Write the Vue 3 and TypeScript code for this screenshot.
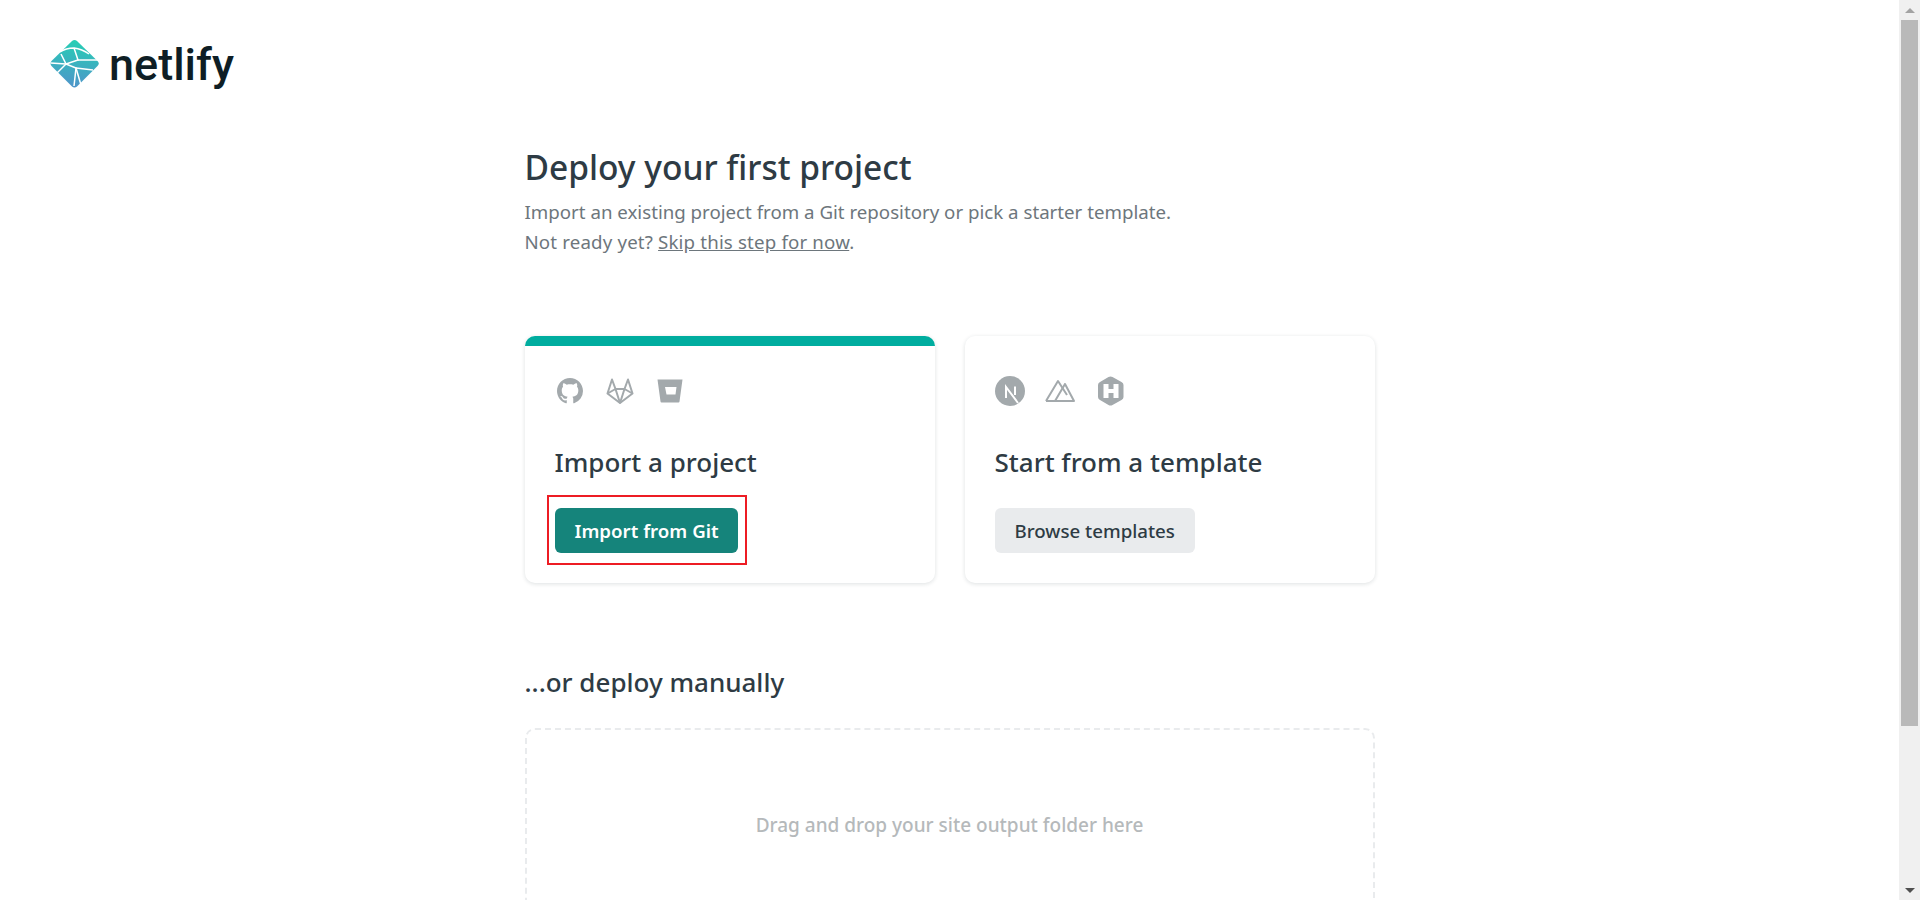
<script setup lang="ts">
const gitIcons = ["github", "gitlab", "bitbucket"];
const templateIcons = ["next", "nuxt", "hugo"];
</script>

<template>
  <div class="shell">
    <div class="viewport">
      <header class="top">
        <a class="logo" href="#">
          <svg class="logo-mark" width="50" height="50" viewBox="0 0 50 50">
            <defs>
              <linearGradient id="logo-grad" x1="0.55" y1="0" x2="0.45" y2="1">
                <stop offset="0" stop-color="#25cfb4" />
                <stop offset="1" stop-color="#4f94ca" />
              </linearGradient>
            </defs>
            <path d="M22 2 Q24.500 0 27 2 L47.500 22 Q50 24.500 47.500 27 L27 47.500 Q24.500 49.500 22 47.500 L1.500 27 Q-0.500 24.500 1.500 22 Z" fill="url(#logo-grad)" />
            <g fill="none" stroke="#fff" stroke-width="1.500">
              <path d="M10 13 Q16 9 24 9 Q32 10 39 15" />
              <path d="M24 9 L28 21 L16 25" />
              <path d="M16 25 L11 15" />
              <path d="M16 25 L0.500 24" />
              <path d="M16 25 L6 35" />
              <path d="M16 25 L26 29 L24 47" />
              <path d="M28 21 L49 21" />
              <path d="M26 29 L31 46" />
              <path d="M26 29 L43 31" />
            </g>
          </svg>
          <span class="logo-text">netlify</span>
        </a>
      </header>

      <main class="content">
        <h1 class="title">Deploy your first project</h1>
        <p class="lead">
          Import an existing project from a Git repository or pick a starter template.<br />
          <span class="lead-second">Not ready yet? <a href="#" class="skip">Skip this step for now</a>.</span>
        </p>

        <div class="cards">
          <section class="card card-active">
            <div class="icons icons-git">
              <template v-for="icon in gitIcons" :key="icon">
                <svg v-if="icon === 'github'" class="icon" width="26" height="26" viewBox="0 0 16 16">
                  <path fill="#a3a9ac" d="M8 0C3.58 0 0 3.58 0 8c0 3.54 2.29 6.53 5.47 7.59.4.07.55-.17.55-.38 0-.19-.01-.82-.01-1.49-2.01.37-2.53-.49-2.69-.94-.09-.23-.48-.94-.82-1.13-.28-.15-.68-.52-.01-.53.63-.01 1.08.58 1.23.82.72 1.21 1.87.87 2.33.66.07-.52.28-.87.51-1.07-1.78-.2-3.64-.89-3.64-3.95 0-.87.31-1.59.82-2.15-.08-.2-.36-1.02.08-2.12 0 0 .67-.21 2.2.82.64-.18 1.32-.27 2-.27.68 0 1.36.09 2 .27 1.53-1.04 2.2-.82 2.2-.82.44 1.1.16 1.92.08 2.12.51.56.82 1.27.82 2.15 0 3.07-1.87 3.75-3.65 3.95.29.25.54.73.54 1.48 0 1.07-.01 1.93-.01 2.2 0 .21.15.46.55.38A8.013 8.013 0 0016 8c0-4.420-3.580-8-8-8z" />
                </svg>
                <svg v-else-if="icon === 'gitlab'" class="icon" width="28" height="26" viewBox="0 0 28 26">
                  <g fill="none" stroke="#a3a9ac" stroke-width="2" stroke-linejoin="round">
                    <path d="M14 25 L1.500 15.500 L6 1.500 L9.500 11 H18.500 L22 1.500 L26.500 15.500 Z" />
                    <path d="M14 25 L9.500 11 M14 25 L18.500 11 M1.500 15.500 L9.500 11 M26.500 15.500 L18.500 11" />
                  </g>
                </svg>
                <svg v-else class="icon" width="26" height="24" viewBox="0 0 26 24">
                  <path fill="#a3a9ac" fill-rule="evenodd" d="M0.500 0.500 H25.500 L22.500 22.500 Q22.400 23.500 21.500 23.500 H4.500 Q3.600 23.500 3.500 22.500 Z M8 8 H19.500 L18.500 15.500 H9.500 Z" />
                </svg>
              </template>
            </div>
            <h2 class="card-title">Import a project</h2>
            <div class="action">
              <button class="btn btn-primary">Import from Git</button>
              <span class="highlight"></span>
            </div>
          </section>

          <section class="card">
            <div class="icons icons-template">
              <template v-for="icon in templateIcons" :key="icon">
                <svg v-if="icon === 'next'" class="icon" width="30" height="30" viewBox="0 0 30 30">
                  <circle cx="15" cy="15" r="15" fill="#a3a9ac" />
                  <path d="M11 22 V11 L23 27 M20 10.500 V19" fill="none" stroke="#fff" stroke-width="2" />
                </svg>
                <svg v-else-if="icon === 'nuxt'" class="icon" width="30" height="24" viewBox="0 0 30 24">
                  <g fill="none" stroke="#a3a9ac" stroke-width="2" stroke-linejoin="round">
                    <path d="M1 22 L13 2 L22 16" />
                    <path d="M1 22 H29 L20 5 L10 22" />
                  </g>
                </svg>
                <svg v-else class="icon" width="29" height="30" viewBox="-3 0 29 30">
                  <path fill="#a3a9ac" d="M10.500 1 Q12.500 0 14.500 1 L23.500 6 Q25.500 7 25.500 9 V21 Q25.500 23 23.500 24 L14.500 29 Q12.500 30 10.500 29 L2 24 Q0 23 0 21 V9 Q0 7 2 6 Z" />
                  <path fill="#fff" d="M5.500 8 H10.500 V13 H15.500 V8 H20.500 V22 H15.500 V17 H10.500 V22 H5.500 Z" />
                </svg>
              </template>
            </div>
            <h2 class="card-title">Start from a template</h2>
            <div class="action">
              <button class="btn btn-muted">Browse templates</button>
            </div>
          </section>
        </div>

        <h2 class="manual-title">...or deploy manually</h2>
        <div class="dropzone">Drag and drop your site output folder here</div>
      </main>
    </div>

    <div class="scrollbar">
      <span class="arrow arrow-up"></span>
      <div class="track"><div class="thumb"></div></div>
      <span class="arrow arrow-down"></span>
    </div>
  </div>
</template>

<style scoped>
.shell {
  display: flex;
  height: 900px;
  overflow: hidden;
  font-family: "Noto Sans", "Open Sans", sans-serif;
  color: #2e3b44;
}

.viewport {
  flex: 1;
  min-width: 0;
  overflow: hidden;
}

.top {
  padding: 39px 0 0 50px;
}

.logo {
  display: inline-flex;
  align-items: center;
  gap: 9px;
  text-decoration: none;
  height: 50px;
}

.logo-mark {
  flex-shrink: 0;
}

.logo-text {
  font-family: Roboto, sans-serif;
  font-weight: 500;
  font-size: 45px;
  color: #0e1e25;
}

.content {
  width: 850px;
  margin: 0 auto;
  padding-top: 50px;
}

.title {
  margin: 0;
  font-size: 33.500px;
  line-height: 46px;
  font-weight: 500;
}

.lead {
  margin: 7px 0 0;
  font-size: 18.700px;
  line-height: 30px;
  color: #6d767c;
}

.lead-second {
  letter-spacing: 0.16px;
}

.skip {
  color: #6d767c;
}

.cards {
  display: grid;
  grid-template-columns: 410px 410px;
  gap: 30px;
  margin-top: 79px;
}

.card {
  height: 247px;
  padding: 40px 30px 0;
  box-sizing: border-box;
  border-radius: 10px;
  background: #fff;
  box-shadow: 0 1px 4px rgba(20, 40, 50, 0.14);
}

.card-active {
  border-top: 10px solid #00ad9f;
  padding-top: 30px;
}

.icons {
  display: flex;
  align-items: center;
  height: 30px;
}

.icons-git {
  gap: 23px;
  padding-left: 2px;
}

.icons-template {
  gap: 20px;
}

.card-title {
  margin: 38px 0 0;
  font-size: 26px;
  line-height: 36px;
  font-weight: 500;
}

.action {
  position: relative;
  display: inline-block;
  margin-top: 28px;
}

.btn {
  display: block;
  height: 45px;
  padding: 0 20px;
  border: 0;
  border-radius: 6px;
  font-family: inherit;
  font-size: 18.700px;
  font-weight: 600;
}

.btn-primary {
  padding: 0 19px 0 20px;
  background: #15847b;
  color: #fff;
}

.btn-muted {
  background: #e9ebed;
  color: #2e3b44;
  font-weight: 500;
}

.highlight {
  position: absolute;
  top: -13px;
  right: -9px;
  bottom: -12px;
  left: -8px;
  border: 2px solid #ed1c24;
}

.manual-title {
  margin: 81px 0 0;
  font-size: 26px;
  line-height: 36px;
  font-weight: 500;
}

.dropzone {
  display: flex;
  justify-content: center;
  padding-top: 82px;
  box-sizing: border-box;
  height: 240px;
  margin-top: 28px;
  border: 2px dashed #e9ebed;
  border-radius: 10px;
  font-size: 19px;
  font-weight: 500;
  color: #b5b9bb;
}

.scrollbar {
  display: flex;
  flex-direction: column;
  align-items: center;
  width: 21px;
  flex-shrink: 0;
  background: #f0f0f0;
}

.arrow {
  width: 0;
  height: 0;
  margin: 8px 0 7px;
  border-left: 5px solid transparent;
  border-right: 5px solid transparent;
}

.arrow-up {
  border-bottom: 5px solid #a3a3a3;
}

.arrow-down {
  border-top: 5px solid #505050;
}

.track {
  flex: 1;
  width: 100%;
  padding: 0 2px;
  box-sizing: border-box;
}

.thumb {
  height: 706px;
  background: #b9b9b9;
}
</style>
